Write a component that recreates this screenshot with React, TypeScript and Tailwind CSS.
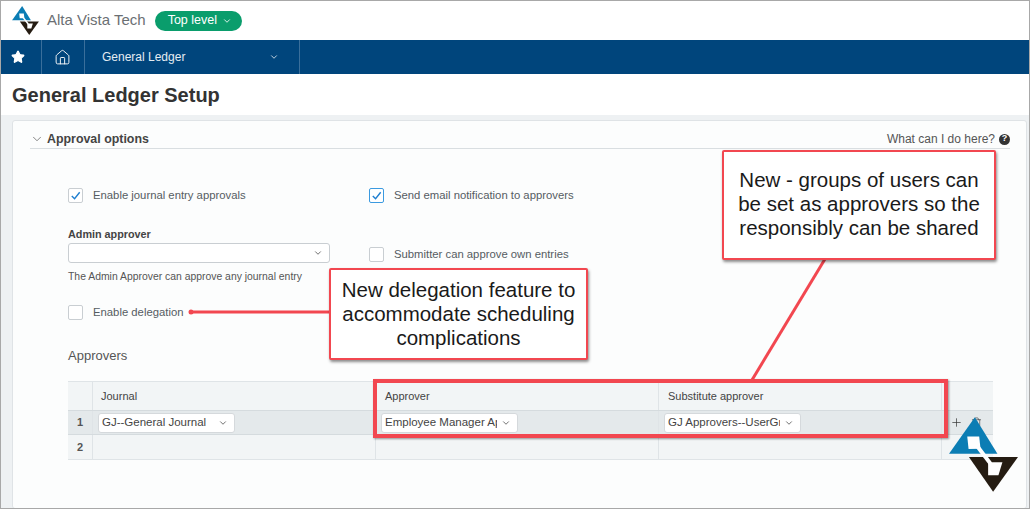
import { ChevronDown, Home, Plus, Star, Trash2 } from "lucide-react";
import { ReactNode } from "react";

const Logo = ({ className }: { className: string }) => (
  <svg viewBox="267 140 208 225" className={className}>
    <path d="M345 140 L413 250 L267 250 Z" fill="#0b7db4" />
    <path d="M327 260 L475 260 L400 365 Z" fill="#251c12" />
    <path d="M322 198 L358 198 L362 235 L326 236 Z" fill="#fff" />
    <path d="M385 276 L428 276 L416 315 L385 315 Z" fill="#fff" />
    <path d="M354 230 L392 280" fill="none" stroke="#fff" strokeWidth="12" />
  </svg>
);

const Check = ({ checked, strong }: { checked?: boolean; strong?: boolean }) => (
  <div
    className={`flex h-[15px] w-[15px] items-center justify-center rounded-[2px] border bg-white ${
      strong ? "border-[#3b9ae0]" : "border-[#c9ced2]"
    }`}
  >
    {checked && (
      <svg viewBox="0 0 14 14" className="h-[13px] w-[13px]">
        <path d="M3 7.5 L6 10.5 L11.5 3.5" fill="none" stroke="#1f7fd0" strokeWidth="1.5" />
      </svg>
    )}
  </div>
);

const CheckRow = ({ label, checked, strong }: { label: string; checked?: boolean; strong?: boolean }) => (
  <div className="flex items-center gap-[10px] text-[11.3px] text-[#555c62]">
    <Check checked={checked} strong={strong} />
    <span>{label}</span>
  </div>
);

const CellSelect = ({ value, width }: { value: string; width: string }) => (
  <div
    className={`flex h-[20px] items-center justify-between rounded-[3px] border border-[#d5d9dc] bg-white pl-[3px] pr-[6px] text-[11.5px] text-[#444] ${width}`}
  >
    <span className="overflow-hidden whitespace-nowrap">{value}</span>
    <ChevronDown size={10} className="ml-1 shrink-0 text-[#555]" />
  </div>
);

const Cell = ({ children, className = "" }: { children?: ReactNode; className?: string }) => (
  <div className={`flex items-center border-r border-[#dfe4e7] ${className}`}>{children}</div>
);

const Callout = ({ className, children }: { className: string; children: ReactNode }) => (
  <div
    className={`absolute z-20 flex items-center justify-center rounded-[2px] border-2 border-[#f24750] bg-white text-center text-[20.5px] leading-[24px] text-[#1a1a1a] shadow-[1px_2px_3px_rgba(0,0,0,0.45)] ${className}`}
  >
    <div>{children}</div>
  </div>
);

export default function App() {
  return (
    <div className="relative h-[509px] w-[1030px] overflow-hidden border border-[#a8a8a8] bg-white font-['Liberation_Sans',sans-serif]">
      <header className="flex h-[39px] items-center pl-[11px]">
        <Logo className="h-[29px] w-[27px]" />
        <span className="ml-[8px] text-[15px] text-[#6b6f73]">Alta Vista Tech</span>
        <div className="ml-[9px] flex h-[20px] w-[87px] items-center gap-[5px] rounded-full bg-[#0a9d6c] pl-[13px] text-[12.5px] text-white">
          Top level
          <ChevronDown size={10} />
        </div>
      </header>

      <nav className="flex h-[34px] items-stretch bg-[#00457c] text-white">
        <div className="flex w-[41px] items-center justify-center border-r border-[#3a6f9b] pr-[6px]">
          <Star size={14} fill="white" />
        </div>
        <div className="flex w-[43px] items-center justify-center border-r border-[#3a6f9b] pr-[2px]">
          <Home size={17} strokeWidth={1.3} />
        </div>
        <div className="flex w-[215px] items-center justify-between border-r border-[#3a6f9b] pl-[17px] pr-[20px] text-[12px] text-[#e4ecf2]">
          General Ledger
          <ChevronDown size={10} />
        </div>
      </nav>

      <h1 className="flex h-[41px] items-center pl-[11px] text-[20px] font-bold text-[#333]">General Ledger Setup</h1>

      <main className="h-[394px] bg-[#eef1f3] pl-[11px] pr-[2px] pt-[5px]">
        <section className="h-full rounded-[3px] border border-[#dfe3e6] bg-[#fcfdfd] pl-[17px] pr-[16px]">
          <div className="flex h-[28px] items-center justify-between border-b border-[#d9dee1] pt-[9px]">
            <div className="flex items-center gap-[3px] text-[12.4px] font-bold text-[#444]">
              <ChevronDown size={14} strokeWidth={1.2} className="text-[#555]" />
              Approval options
            </div>
            <div className="flex items-center gap-[4px] text-[12px] text-[#555]">
              What can I do here?
              <span className="flex h-[11px] w-[11px] items-center justify-center rounded-full bg-[#333] text-[9px] font-bold text-white">
                ?
              </span>
            </div>
          </div>

          <div className="ml-[38px] mt-[38px] grid grid-cols-[301px_1fr]">
            <div className="flex flex-col">
              <CheckRow label="Enable journal entry approvals" checked />
              <label className="mt-[22px] text-[10.8px] font-bold text-[#444]">Admin approver</label>
              <div className="mt-[1px] flex h-[20px] w-[262px] items-center justify-end rounded-[3px] border border-[#c9ced2] bg-white pr-[6px]">
                <ChevronDown size={10} className="text-[#555]" />
              </div>
              <p className="mt-[6px] text-[10.4px] text-[#555]">The Admin Approver can approve any journal entry</p>
              <div className="mt-[19px]">
                <CheckRow label="Enable delegation" />
              </div>
            </div>
            <div className="flex flex-col">
              <CheckRow label="Send email notification to approvers" checked strong />
              <div className="mt-[42px]">
                <CheckRow label="Submitter can approve own entries" />
              </div>
            </div>
          </div>

          <h2 className="ml-[38px] mt-[25px] text-[13px] text-[#555]">Approvers</h2>

          <div className="ml-[38px] mt-[16px] w-[925px] text-[11px] text-[#444]">
            <div className="grid h-[29px] grid-cols-[25px_283px_283px_283px_51px] border-t border-[#dfe4e7] bg-[#f2f5f6]">
              <Cell />
              <Cell className="pl-[8px]">Journal</Cell>
              <Cell className="pl-[9px]">Approver</Cell>
              <Cell className="pl-[9px]">Substitute approver</Cell>
              <div />
            </div>
            <div className="grid h-[25px] grid-cols-[25px_283px_283px_283px_51px] border-y border-[#d5dbde] bg-[#e4e9eb]">
              <Cell className="justify-center font-bold text-[#555]">1</Cell>
              <Cell className="pl-[5px]">
                <CellSelect value="GJ--General Journal" width="w-[137px]" />
              </Cell>
              <Cell className="pl-[5px]">
                <CellSelect value="Employee Manager Approver" width="w-[137px]" />
              </Cell>
              <Cell className="pl-[5px]">
                <CellSelect value="GJ Approvers--UserGroup" width="w-[137px]" />
              </Cell>
              <div className="flex items-center gap-[8px] pl-[8px] text-[#333]">
                <Plus size={13} strokeWidth={1.3} />
                <Trash2 size={11} strokeWidth={1.3} />
              </div>
            </div>
            <div className="grid h-[25px] grid-cols-[25px_283px_283px_283px_51px] border-b border-[#dfe4e7] bg-[#f2f5f6]">
              <Cell className="justify-center font-bold text-[#555]">2</Cell>
              <Cell />
              <Cell />
              <Cell />
              <div />
            </div>
          </div>
        </section>
      </main>

      {/* annotations drawn over the page */}
      <svg className="absolute left-[-1px] top-[-1px] z-10 h-[509px] w-[1030px]" viewBox="0 0 1030 509">
        <path d="M191 312 H330" stroke="#f24750" strokeWidth="3" />
        <circle cx="191" cy="312" r="2.5" fill="#f24750" />
        <path d="M825 259 L752 380" stroke="#f24750" strokeWidth="3" />
      </svg>
      <Callout className="left-[328px] top-[267px] h-[92px] w-[259px]">
        New delegation feature to
        <br />
        accommodate scheduling
        <br />
        complications
      </Callout>
      <Callout className="left-[721px] top-[149px] h-[110px] w-[274px] pb-[2px]">
        New - groups of users can
        <br />
        be set as approvers so the
        <br />
        responsibly can be shared
      </Callout>
      <div className="absolute left-[372px] top-[378px] z-20 h-[59px] w-[575px] border-[4px] border-[#f24750] shadow-[1px_1px_2px_rgba(0,0,0,0.4)]" />
      <Logo className="absolute left-[948px] top-[416px] z-30 h-[75px] w-[69px]" />
    </div>
  );
}
